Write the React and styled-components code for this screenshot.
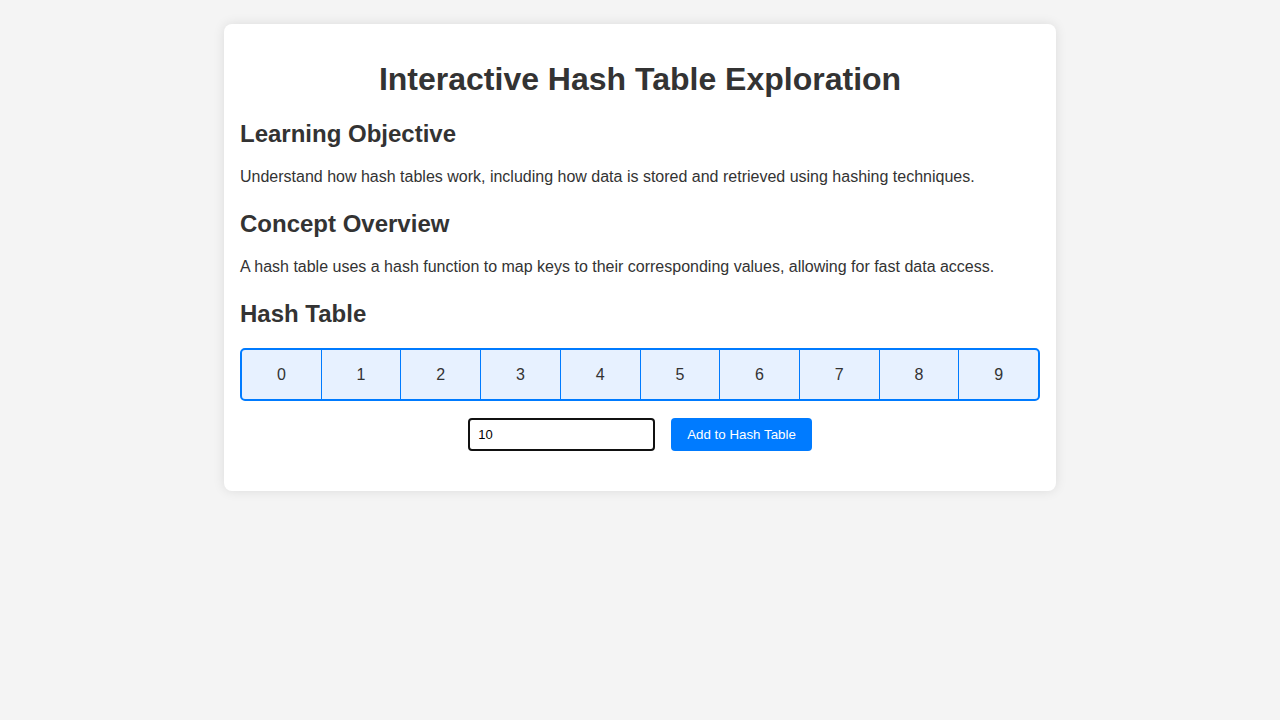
import React, { useState } from "react";
import styled, { createGlobalStyle } from "styled-components";

const GlobalStyle = createGlobalStyle`
  body {
    margin: 0;
    background-color: #f4f4f4;
    font-family: "Liberation Sans", Arial, sans-serif;
    color: #333;
  }
`;

const Page = styled.div`
  padding: 24px 0;
`;

const Card = styled.div`
  width: 800px;
  margin: 0 auto;
  padding: 16px;
  background: #fff;
  border-radius: 8px;
  box-shadow: 0 0 12px rgba(0, 0, 0, 0.1);
`;

const Title = styled.h1`
  font-size: 32px;
  text-align: center;
  margin: 21px 0 22px;
  color: #333;
`;

const Section = styled.section`
  margin-bottom: 24px;
  h2 {
    font-size: 24px;
    margin: 0 0 20px;
    color: #333;
  }
  p {
    font-size: 16px;
    margin: 0;
    color: #333;
  }
`;

const Table = styled.div`
  display: flex;
  border: 2px solid #007bff;
  border-radius: 5px;
  background: #e7f1ff;
  overflow: hidden;
`;

const Cell = styled.div`
  flex: 1;
  height: 49px;
  display: flex;
  align-items: center;
  justify-content: center;
  font-size: 16px;
  color: #333;
  border-right: ${(p) => (p.$last ? "none" : "1px solid #007bff")};
`;

const Controls = styled.div`
  display: flex;
  justify-content: center;
  gap: 16px;
  margin-top: 17px;
`;

const Input = styled.input`
  box-sizing: border-box;
  width: 187px;
  height: 33px;
  padding: 0 8px;
  border: 2px solid #111;
  border-radius: 4px;
  font-family: "Liberation Sans", Arial, sans-serif;
  font-size: 13px;
  color: #000;
  outline: none;
`;

const Button = styled.button`
  box-sizing: border-box;
  height: 33px;
  padding: 0 16px;
  border: none;
  border-radius: 4px;
  background: #007bff;
  color: #fff;
  font-family: "Liberation Sans", Arial, sans-serif;
  font-size: 13.33px;
  cursor: pointer;
`;

export default function App() {
  const [value, setValue] = useState("10");
  const buckets = [0, 1, 2, 3, 4, 5, 6, 7, 8, 9];

  return (
    <>
      <GlobalStyle />
      <Page>
        <Card>
          <Title>Interactive Hash Table Exploration</Title>
          <Section>
            <h2>Learning Objective</h2>
            <p>
              Understand how hash tables work, including how data is stored and
              retrieved using hashing techniques.
            </p>
          </Section>
          <Section>
            <h2>Concept Overview</h2>
            <p>
              A hash table uses a hash function to map keys to their
              corresponding values, allowing for fast data access.
            </p>
          </Section>
          <Section>
            <h2>Hash Table</h2>
            <Table>
              {buckets.map((b, i) => (
                <Cell key={b} $last={i === buckets.length - 1}>
                  {b}
                </Cell>
              ))}
            </Table>
            <Controls>
              <Input value={value} onChange={(e) => setValue(e.target.value)} />
              <Button>Add to Hash Table</Button>
            </Controls>
          </Section>
        </Card>
      </Page>
    </>
  );
}
